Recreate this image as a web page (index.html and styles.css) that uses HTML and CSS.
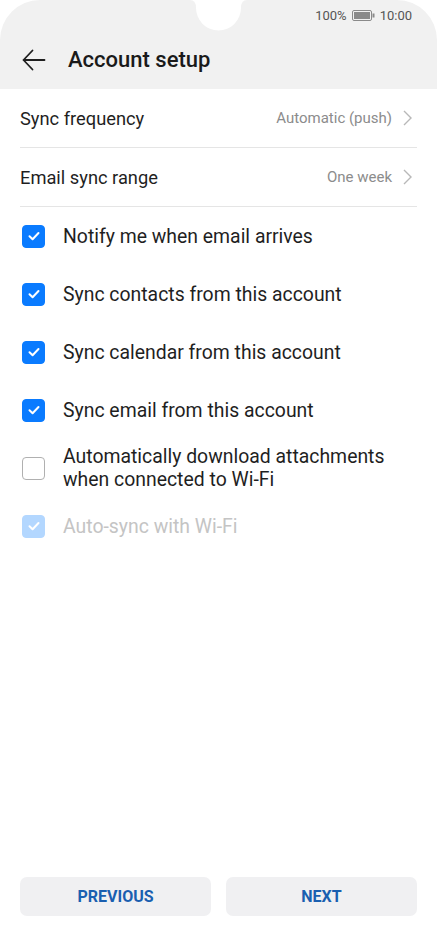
FILE: index.html
```html
<!DOCTYPE html>
<html lang="en">
<head>
    <meta charset="UTF-8" />
    <meta name="viewport" content="width=device-width, initial-scale=1.0"/>
    <title>Account setup</title>
    <link rel="stylesheet" href="styles.css">
</head>
<body>
<div class="screen">
    <header class="appbar">
        <svg class="notch" viewBox="0 0 57 32" width="57" height="32">
            <path d="M0 0 Q6 0 6 8 A22.5 22.5 0 0 0 51 8 Q51 0 57 0 Z" fill="#fff" />
        </svg>
        <div class="status">
            <span>100%</span>
            <svg class="battery" width="23" height="11" viewBox="0 0 23 11">
                <rect x="0.5" y="0.5" width="19" height="10" rx="1.5" fill="none" stroke="#8a8a8a" />
                <rect x="2" y="2" width="16" height="7" fill="#8a8a8a" />
                <rect x="20.5" y="3.5" width="2" height="4" fill="#8a8a8a" />
            </svg>
            <span>10:00</span>
        </div>
        <div class="titlebar">
            <svg class="back" width="24" height="24" viewBox="0 0 24 24">
                <path d="M22.5 12 H1.5 M10.5 2.5 L1.5 12 L10.5 21.5" fill="none" stroke="#1f1f1f" stroke-width="1.8" stroke-linecap="round" stroke-linejoin="round" />
            </svg>
            <h1>Account setup</h1>
        </div>
    </header>

    <main class="content">
        <div class="row link">
            <span class="label">Sync frequency</span>
            <span class="value">Automatic (push)</span>
            <svg class="chev" width="9" height="16" viewBox="0 0 9 16"><path d="M1 1 L8 8 L1 15" fill="none" stroke="#b8b8b8" stroke-width="1.4" /></svg>
        </div>
        <div class="row link">
            <span class="label">Email sync range</span>
            <span class="value">One week</span>
            <svg class="chev" width="9" height="16" viewBox="0 0 9 16"><path d="M1 1 L8 8 L1 15" fill="none" stroke="#b8b8b8" stroke-width="1.4" /></svg>
        </div>

        <div class="row check">
            <span class="box on"><svg width="14" height="14" viewBox="0 0 14 14"><path d="M2.5 7.2 L5.6 10.2 L11.5 4" fill="none" stroke="#fff" stroke-width="2" stroke-linecap="round" stroke-linejoin="round" /></svg></span>
            <span class="label">Notify me when email arrives</span>
        </div>
        <div class="row check">
            <span class="box on"><svg width="14" height="14" viewBox="0 0 14 14"><path d="M2.5 7.2 L5.6 10.2 L11.5 4" fill="none" stroke="#fff" stroke-width="2" stroke-linecap="round" stroke-linejoin="round" /></svg></span>
            <span class="label">Sync contacts from this account</span>
        </div>
        <div class="row check">
            <span class="box on"><svg width="14" height="14" viewBox="0 0 14 14"><path d="M2.5 7.2 L5.6 10.2 L11.5 4" fill="none" stroke="#fff" stroke-width="2" stroke-linecap="round" stroke-linejoin="round" /></svg></span>
            <span class="label">Sync calendar from this account</span>
        </div>
        <div class="row check">
            <span class="box on"><svg width="14" height="14" viewBox="0 0 14 14"><path d="M2.5 7.2 L5.6 10.2 L11.5 4" fill="none" stroke="#fff" stroke-width="2" stroke-linecap="round" stroke-linejoin="round" /></svg></span>
            <span class="label">Sync email from this account</span>
        </div>
        <div class="row check">
            <span class="box"></span>
            <span class="label">Automatically download attachments<br>when connected to Wi-Fi</span>
        </div>
        <div class="row check disabled">
            <span class="box on"><svg width="14" height="14" viewBox="0 0 14 14"><path d="M2.5 7.2 L5.6 10.2 L11.5 4" fill="none" stroke="#fff" stroke-width="2" stroke-linecap="round" stroke-linejoin="round" /></svg></span>
            <span class="label">Auto-sync with Wi-Fi</span>
        </div>
    </main>

    <footer class="actions">
        <button>PREVIOUS</button>
        <button>NEXT</button>
    </footer>
</div>
</body>
</html>
```

FILE: styles.css
```css
body {
    margin: 0;
    background: #fff;
    font-family: Roboto, "Noto Sans", sans-serif;
    color: #1f1f1f;
}

.screen {
    width: 437px;
    height: 948px;
    display: flex;
    flex-direction: column;
    overflow: hidden;
}

.appbar {
    position: relative;
    background: #f1f1f1;
    border-radius: 40px 40px 0 0;
    height: 89px;
}

.notch {
    position: absolute;
    top: 0;
    left: 190px;
}

.status {
    height: 30px;
    display: flex;
    align-items: center;
    justify-content: flex-end;
    gap: 5px;
    padding-right: 25px;
    font-size: 13px;
    color: #555;
}

.battery {
    margin-top: 1px;
}

.titlebar {
    height: 59px;
    display: flex;
    align-items: center;
    padding-left: 22px;
    gap: 22px;
}

.titlebar h1 {
    margin: 0;
    font-size: 22px;
    font-weight: 500;
    color: #1a1a1a;
}

.content {
    padding: 0 20px;
}

.row {
    min-height: 58px;
    display: flex;
    align-items: center;
    font-size: 19.4px;
}

.row.link {
    font-size: 18.3px;
    border-bottom: 1px solid #e5e5e5;
}

.row.link .label {
    flex: 1;
}

.value {
    font-size: 15px;
    color: #8c8c8c;
    margin-right: 11px;
}

.chev {
    margin-right: 5px;
}

.check .box {
    width: 21px;
    height: 21px;
    margin-left: 2px;
    margin-right: 18px;
    border-radius: 4px;
    border: 1.5px solid #b0b0b0;
    display: flex;
    align-items: center;
    justify-content: center;
    flex-shrink: 0;
}

.check .box.on {
    background: #0a7bff;
    border-color: #0a7bff;
}

.check .label {
    line-height: 23px;
}

.check.disabled .box.on {
    background: #b3d7ff;
    border-color: #b3d7ff;
}

.check.disabled .label {
    color: #c4c4c4;
}

.actions {
    margin-top: auto;
    display: flex;
    gap: 15px;
    padding: 0 20px 32px;
}

.actions button {
    flex: 1;
    height: 39px;
    border: none;
    border-radius: 7px;
    background: #f0f0f2;
    color: #1a5fb0;
    font-family: Roboto, sans-serif;
    font-size: 16px;
    font-weight: 700;
}
```
